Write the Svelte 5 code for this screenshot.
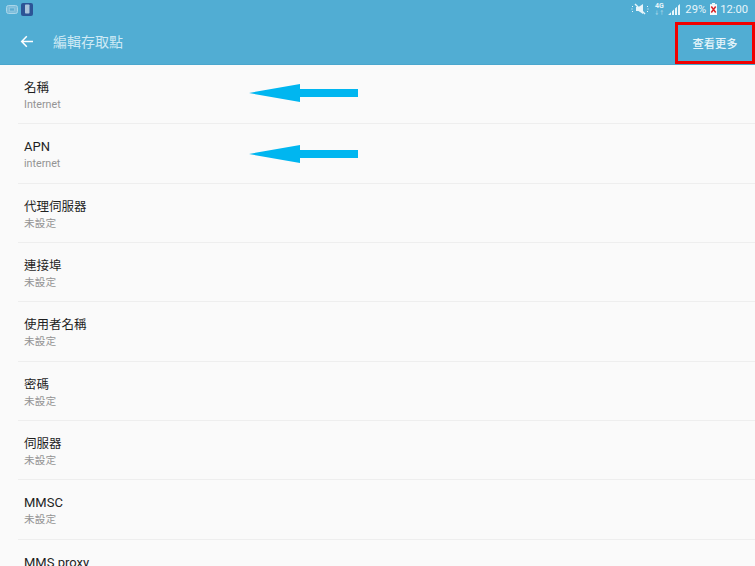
<script>
  // APN edit screen
  const rows = [
    { label: "名稱", value: "Internet", arrow: "first" },
    { label: "APN", value: "internet", arrow: "second", latin: true },
    { label: "代理伺服器", value: "未設定" },
    { label: "連接埠", value: "未設定" },
    { label: "使用者名稱", value: "未設定" },
    { label: "密碼", value: "未設定" },
    { label: "伺服器", value: "未設定" },
    { label: "MMSC", value: "未設定", latin: true },
    { label: "MMS proxy", value: "未設定", latin: true },
  ];
</script>

<div class="screen">
  <header class="top">
    <div class="status">
      <div class="status_left">
        <svg width="12" height="9" viewBox="0 0 12 9">
          <rect x="0.5" y="0.500" width="11" height="8" rx="2" fill="#7fbedb" stroke="#a9d6e9" />
          <rect x="3.500" y="3" width="5" height="3" fill="#5dacd0" stroke="#a9d6e9" stroke-width="0.500" />
        </svg>
        <svg width="12" height="13" viewBox="0 0 12 13">
          <rect width="12" height="13" rx="2" fill="#2c5496" />
          <rect x="4" y="1.500" width="4.500" height="9" rx="0.700" fill="#a9c4dc" />
        </svg>
      </div>
      <div class="status_right">
        <svg class="mute" width="18" height="12" viewBox="0 0 18 12">
          <path d="M5 4h2.500L12 1v10L7.500 8H5z" fill="#e8f5fa" />
          <path d="M4 1l10 10" stroke="#e8f5fa" stroke-width="1.400" />
          <path d="M1.500 3v1M1 5.500v1M1.500 8v1M16.500 3v1M17 5.500v1M16.500 8v1" stroke="#e8f5fa" />
        </svg>
        <span class="net">4G<i>↓↑</i></span>
        <svg class="signal" width="12" height="11" viewBox="0 0 12 11">
          <path d="M0 11L3 8.200V11zM4 7.300L6 5.500V11H4zM7 4.500L9 2.700V11H7zM10 1.800L12 0V11H10z" fill="#e8f5fa" />
        </svg>
        <span class="pct">29%</span>
        <svg class="batt" width="7" height="12" viewBox="0 0 7 12">
          <rect x="2" width="3" height="1.500" fill="#f3fafc" />
          <rect y="1.200" width="7" height="10.800" fill="#f3fafc" />
          <path d="M1.300 3.500l4.400 6M5.700 3.500l-4.400 6" stroke="#d8252a" stroke-width="1.500" />
        </svg>
        <span class="clock">12:00</span>
      </div>
    </div>
    <div class="bar">
      <svg class="back" width="14" height="13" viewBox="0 0 14 13">
        <path d="M13 6.500H2M6.800 1.300L1.700 6.500l5.100 5.200" fill="none" stroke="#fff" stroke-width="1.500" />
      </svg>
      <h1>編輯存取點</h1>
      <button class="more">查看更多</button>
    </div>
  </header>

  <ul class="list">
    {#each rows as row}
      <li class="row">
        <div class="label" class:latin={row.latin}>{row.label}</div>
        <div class="value">{row.value}</div>
        {#if row.arrow}
          <svg class="arrow {row.arrow}" width="109" height="18" viewBox="0 0 109 18">
            <path d="M0 9L51 0V5H109V13H51V18Z" fill="#00b6f0" />
          </svg>
        {/if}
      </li>
    {/each}
  </ul>
</div>

<style>
  :global(body) {
    margin: 0;
    background: #fafafa;
  }
  .screen {
    width: 755px;
    height: 566px;
    overflow: hidden;
    font-family: Roboto, "Noto Sans CJK TC", sans-serif;
    background: #fafafa;
  }
  .top {
    height: 65px;
    background: #51add3;
    border-bottom: 1px solid #4aa6cd;
    box-sizing: border-box;
  }
  .status {
    height: 20px;
    display: flex;
    justify-content: space-between;
    align-items: center;
    padding: 0 7px 2px 6px;
    box-sizing: border-box;
    color: #e8f5fa;
    font-size: 11.200px;
  }
  .status_left {
    display: flex;
    align-items: center;
    gap: 3px;
  }
  .status_right {
    display: flex;
    align-items: center;
  }
  .net {
    display: flex;
    flex-direction: column;
    align-items: center;
    font-size: 7px;
    font-weight: 700;
    line-height: 7px;
    margin-left: 5px;
  }
  .net i {
    font-style: normal;
    font-size: 5px;
    line-height: 5px;
    opacity: 0.6;
  }
  .signal {
    margin-left: 4px;
  }
  .pct {
    margin-left: 5px;
  }
  .batt {
    margin-left: 4px;
  }
  .clock {
    margin-left: 3px;
  }
  .bar {
    height: 42px;
    display: flex;
    align-items: center;
    padding-left: 20px;
    position: relative;
  }
  h1 {
    margin: 0 0 0 19px;
    font-size: 14px;
    font-weight: 400;
    color: #cfeaf5;
  }
  .more {
    position: absolute;
    right: 0;
    top: 2px;
    width: 80px;
    height: 42px;
    box-sizing: border-box;
    border: 3px solid #f00000;
    background: none;
    padding: 0;
    font: inherit;
    font-size: 11.250px;
    font-weight: 500;
    color: #e6f5fa;
  }
  .list {
    list-style: none;
    margin: 0;
    padding: 0 0 0 18px;
  }
  .row {
    position: relative;
    height: 59.330px;
    box-sizing: border-box;
    border-bottom: 1px solid #eeeeee;
    padding: 14px 0 0 6px;
  }
  .label {
    font-size: 12.500px;
    line-height: 17px;
    color: #1f1f1f;
  }
  .label.latin {
    font-size: 13px;
  }
  .value {
    font-size: 10.700px;
    line-height: 15px;
    margin-top: 1px;
    color: #949494;
  }
  .arrow {
    position: absolute;
    left: 231px;
    top: 19px;
  }
  .arrow.second {
    top: 21px;
  }
</style>
